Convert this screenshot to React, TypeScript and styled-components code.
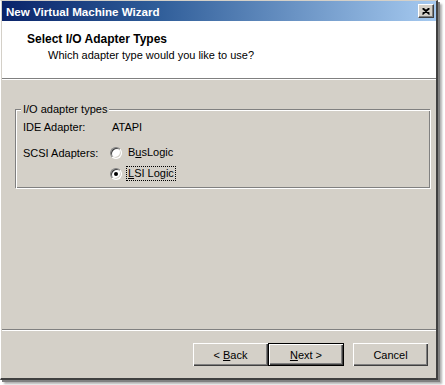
import React from "react";
import styled, { createGlobalStyle } from "styled-components";

const Global = createGlobalStyle`
  html, body { margin: 0; padding: 0; background: #ffffff; }
  body { font-family: Tahoma, "Liberation Sans", "DejaVu Sans", sans-serif; font-size: 11px; color: #000; }
`;

const Page = styled.div`
  width: 445px;
  height: 385px;
  position: relative;
  background: #ffffff;
`;

const Window = styled.div`
  width: 438px;
  height: 380px;
  box-sizing: border-box;
  display: flex;
  flex-direction: column;
  background: #d4d0c8;
  border-top: 1px solid #d4d0c8;
  border-left: 1px solid #ffffff;
  border-right: 2px solid #404040;
  border-bottom: 2px solid #404040;
  padding: 0 0 0 1px;
  box-shadow: 2px 2px 0 #808080, 4px 4px 2px #b0b0b0;
`;

const TitleBar = styled.div`
  height: 20px;
  flex: 0 0 20px;
  display: flex;
  align-items: center;
  justify-content: space-between;
  padding: 0 2px 0 4px;
  background: linear-gradient(to right, #0a246a 0%, #2e5c98 35%, #a6caf0 100%);
  color: #fff;
  font-weight: bold;
  font-size: 11.6px;
  font-family: "Liberation Sans", Arial, sans-serif;
`;

const CloseButton = styled.div`
  width: 16px;
  height: 14px;
  box-sizing: border-box;
  background: #d4d0c8;
  border-top: 1px solid #ffffff;
  border-left: 1px solid #ffffff;
  border-right: 1px solid #404040;
  border-bottom: 1px solid #404040;
  box-shadow: inset -1px -1px 0 #808080;
  display: flex;
  align-items: center;
  justify-content: center;
`;

const Header = styled.div`
  height: 57px;
  flex: 0 0 57px;
  background: #ffffff;
  padding: 11px 0 0 25px;
  box-sizing: border-box;
`;

const HeaderTitle = styled.div`
  font-weight: bold;
  font-size: 12px;
  font-family: "Liberation Sans", Arial, sans-serif;
  line-height: 14px;
`;

const HeaderSub = styled.div`
  margin: 2px 0 0 21px;
  font-size: 11px;
  font-family: "Liberation Sans", Arial, sans-serif;
  line-height: 14px;
`;

const Separator = styled.div`
  height: 0;
  border-top: 1px solid #808080;
  border-bottom: 1px solid #ffffff;
`;

const Body = styled.div`
  flex: 1;
  padding: 23px 6px 0 13px;
`;

const GroupBox = styled.fieldset`
  margin: 0;
  padding: 4px 0 9px 8px;
  height: 85px;
  box-sizing: border-box;
  border: none;
  box-shadow: inset 1px 1px 0 #808080, inset 2px 2px 0 #ffffff, 1px 1px 0 #ffffff, inset -1px -1px 0 #808080;
  position: relative;
  font-family: "Liberation Sans", Arial, sans-serif;
  font-size: 11px;
`;

const Legend = styled.legend`
  padding: 0 2px;
  margin-left: -2px;
  background: #d4d0c8;
  line-height: 12px;
`;

const Row = styled.div<{ top: number }>`
  display: flex;
  align-items: center;
  height: 13px;
  margin-top: ${(p) => p.top}px;
`;

const Label = styled.div<{ w: number }>`
  width: ${(p) => p.w}px;
`;

const RadioRow = styled.div`
  display: flex;
  align-items: center;
  gap: 5px;
`;

const RadioCircle = styled.div<{ checked?: boolean }>`
  width: 12px;
  height: 12px;
  box-sizing: border-box;
  border-radius: 50%;
  background: #ffffff;
  border-top: 1px solid #808080;
  border-left: 1px solid #808080;
  border-right: 1px solid #ffffff;
  border-bottom: 1px solid #ffffff;
  box-shadow: inset 1px 1px 0 #404040, inset -1px -1px 0 #d4d0c8;
  display: flex;
  align-items: center;
  justify-content: center;
  &::after {
    content: "";
    width: 4px;
    height: 4px;
    border-radius: 50%;
    background: ${(p) => (p.checked ? "#000" : "transparent")};
  }
`;

const RadioLabel = styled.span<{ focused?: boolean }>`
  padding: 0 1px;
  outline: ${(p) => (p.focused ? "1px dotted #000" : "none")};
  line-height: 13px;
`;

const Footer = styled.div`
  display: flex;
  justify-content: flex-end;
  padding: 12px 8px 12px 0;
  height: 47px;
  box-sizing: border-box;
`;

const Button = styled.div<{ isDefault?: boolean; gapLeft?: number }>`
  width: ${(p) => (p.isDefault ? 76 : 75)}px;
  height: 23px;
  box-sizing: border-box;
  margin-left: ${(p) => p.gapLeft ?? 0}px;
  background: #d4d0c8;
  border: ${(p) => (p.isDefault ? "1px solid #000" : "none")};
  box-shadow: inset 1px 1px 0 #ffffff, inset -1px -1px 0 #404040, inset -2px -2px 0 #808080;
  display: flex;
  align-items: center;
  justify-content: center;
  font-family: "Liberation Sans", Arial, sans-serif;
  font-size: 11px;
`;

const U = styled.span`
  text-decoration: underline;
`;

export default function App() {
  return (
    <Page>
      <Global />
      <Window>
        <TitleBar>
          <span>New Virtual Machine Wizard</span>
          <CloseButton>
            <svg width="8" height="7" viewBox="0 0 8 7">
              <path d="M0.5 0.5 L7.5 6.5 M1.5 0.5 L7.5 5.5 M7.5 0.5 L0.5 6.5 M6.5 0.5 L0.5 5.5" stroke="#000" strokeWidth="1.3" />
            </svg>
          </CloseButton>
        </TitleBar>
        <Header>
          <HeaderTitle>Select I/O Adapter Types</HeaderTitle>
          <HeaderSub>Which adapter type would you like to use?</HeaderSub>
        </Header>
        <Separator />
        <Body>
          <GroupBox>
            <Legend>I/O adapter types</Legend>
            <Row top={1}>
              <Label w={89}>IDE Adapter:</Label>
              <span>ATAPI</span>
            </Row>
            <Row top={13}>
              <Label w={87}>SCSI Adapters:</Label>
              <RadioRow>
                <RadioCircle />
                <RadioLabel>
                  B<U>u</U>sLogic
                </RadioLabel>
              </RadioRow>
            </Row>
            <Row top={8}>
              <Label w={87} />
              <RadioRow>
                <RadioCircle checked />
                <RadioLabel focused>
                  <U>L</U>SI Logic
                </RadioLabel>
              </RadioRow>
            </Row>
          </GroupBox>
        </Body>
        <Separator />
        <Footer>
          <Button>
            &lt;&nbsp;<U>B</U>ack
          </Button>
          <Button isDefault>
            <U>N</U>ext &gt;
          </Button>
          <Button gapLeft={9}>Cancel</Button>
        </Footer>
      </Window>
    </Page>
  );
}
